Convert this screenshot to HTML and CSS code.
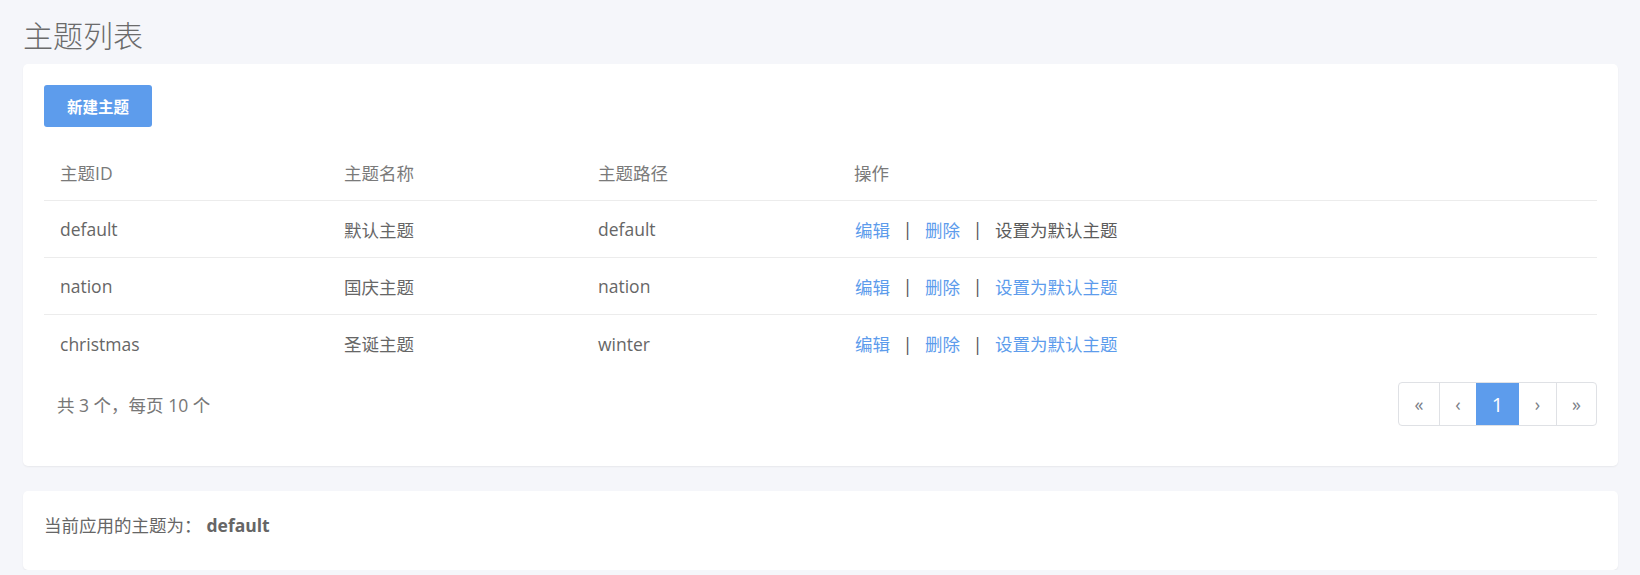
FILE: index.html
```html
<!DOCTYPE html>
<html lang="zh-CN">
<head>
<meta charset="utf-8">
<title>主题列表</title>
<link rel="stylesheet" href="styles.css">
</head>
<body>
<div class="page">
  <h1 class="page-title">主题列表</h1>

  <section class="card card-main">
    <button class="btn-primary" type="button">新建主题</button>

    <div class="table">
      <div class="row head">
        <div class="cell">主题ID</div>
        <div class="cell">主题名称</div>
        <div class="cell">主题路径</div>
        <div class="cell">操作</div>
      </div>
      <div class="row">
        <div class="cell">default</div>
        <div class="cell">默认主题</div>
        <div class="cell">default</div>
        <div class="cell ops"><a class="link">编辑</a><span class="sep">|</span><a class="link">删除</a><span class="sep">|</span><span class="plain">设置为默认主题</span></div>
      </div>
      <div class="row">
        <div class="cell">nation</div>
        <div class="cell">国庆主题</div>
        <div class="cell">nation</div>
        <div class="cell ops"><a class="link">编辑</a><span class="sep">|</span><a class="link">删除</a><span class="sep">|</span><a class="link">设置为默认主题</a></div>
      </div>
      <div class="row last">
        <div class="cell">christmas</div>
        <div class="cell">圣诞主题</div>
        <div class="cell">winter</div>
        <div class="cell ops"><a class="link">编辑</a><span class="sep">|</span><a class="link">删除</a><span class="sep">|</span><a class="link">设置为默认主题</a></div>
      </div>
    </div>

    <div class="table-foot">
      <div class="summary">共 3 个，每页 10 个</div>
      <nav class="pager">
        <span class="pg pg-edge">&laquo;</span>
        <span class="pg pg-step">&lsaquo;</span>
        <span class="pg pg-cur">1</span>
        <span class="pg pg-step">&rsaquo;</span>
        <span class="pg pg-edge">&raquo;</span>
      </nav>
    </div>
  </section>

  <section class="card card-current">
    <span class="current-label">当前应用的主题为：</span><strong class="current-value">default</strong>
  </section>
</div>
</body>
</html>
```

FILE: styles.css
```css
* { box-sizing: border-box; }

html, body {
  margin: 0;
  padding: 0;
  background: #f5f6fa;
}

body {
  font-family: "Open Sans", "Noto Sans CJK SC", sans-serif;
  color: #666;
  font-size: 17.5px;
}

.page {
  padding: 16px 22px 0 23px;
}

.page-title {
  margin: 0 0 12px 0;
  font-size: 30px;
  line-height: 36px;
  font-weight: 300;
  color: #6b6b6b;
  font-family: "Noto Sans CJK SC", sans-serif;
}

.card {
  background: #fff;
  border-radius: 5px;
  box-shadow: 0 1px 2px rgba(0, 0, 0, 0.06);
}

.card-main {
  padding: 21px 21px 40px 21px;
}

.btn-primary {
  display: block;
  width: 108px;
  height: 42px;
  border: 0;
  border-radius: 3px;
  background: #5d9cec;
  color: #fff;
  font-family: "Noto Sans CJK SC", sans-serif;
  font-size: 15.5px;
  font-weight: 700;
  padding: 0;
}

.table {
  margin-top: 17px;
}

.row {
  display: grid;
  grid-template-columns: 284px 254px 256px 1fr;
  height: 57px;
  border-bottom: 1px solid #ececec;
  align-items: center;
}

.row.last {
  border-bottom: 0;
}

.cell {
  padding-left: 16px;
  white-space: nowrap;
}

.row.head .cell {
  color: #7a7a7a;
}

.ops {
  display: flex;
  align-items: center;
  padding-left: 17px;
}

.link {
  color: #5d9cec;
  text-decoration: none;
}

.plain {
  color: #5c5c5c;
}

.sep {
  display: inline-block;
  width: 35px;
  text-align: center;
  color: #555;
}

.table-foot {
  display: flex;
  justify-content: space-between;
  align-items: center;
  margin-top: 10px;
}

.summary {
  padding-left: 13px;
  color: #777;
}

.pager {
  display: flex;
  height: 44px;
  border: 1px solid #dfe1e5;
  border-radius: 4px;
  overflow: hidden;
}

.pg {
  display: flex;
  align-items: center;
  justify-content: center;
  color: #7b8088;
  font-size: 18px;
  border-left: 1px solid #dfe1e5;
}

.pg:first-child {
  border-left: 0;
}

.pg-edge { width: 40px; }
.pg-step { width: 37px; }

.pg-cur {
  width: 43px;
  background: #5d9cec;
  color: #fff;
  font-size: 20px;
  border-left: 0;
}

.pg-cur + .pg {
  border-left: 0;
}

.card-current {
  margin-top: 25px;
  padding: 21px 21px 32px 21px;
  line-height: 26px;
}

.current-label {
  color: #666;
}

.current-value {
  margin-left: 5px;
  color: #666;
  font-weight: 700;
}
```
